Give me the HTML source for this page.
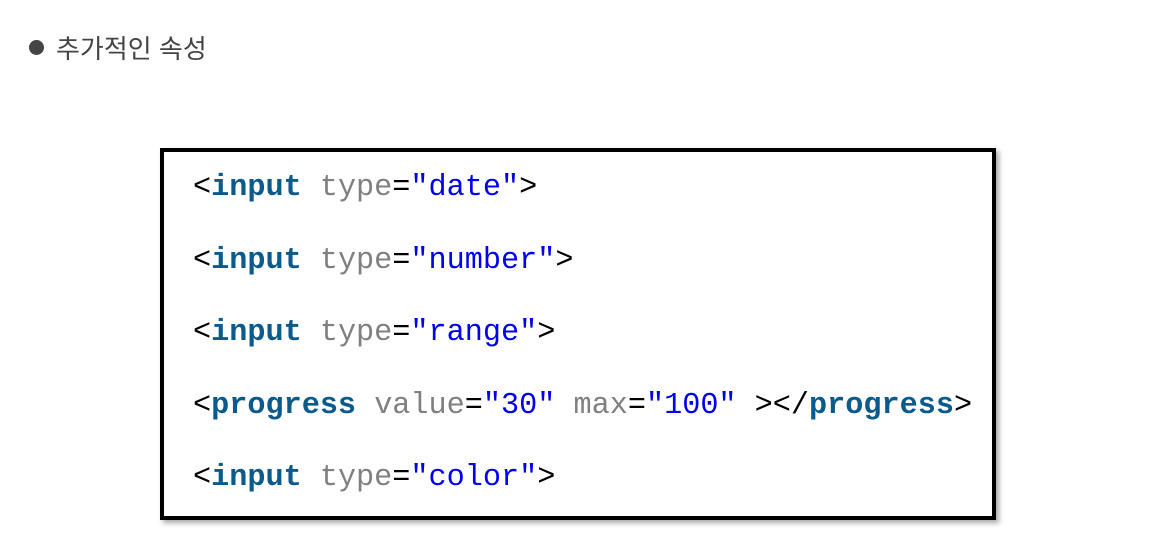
<!DOCTYPE html>
<html><head><meta charset="utf-8"><style>
body{margin:0;width:1153px;height:560px;background:#fff;overflow:hidden;position:relative}
.h{position:absolute;left:56px;top:31px;font:26px "Liberation Sans","Noto Sans CJK KR",sans-serif;color:#444;line-height:36px}
.dot{position:absolute;left:29px;top:40px;width:15px;height:15px;border-radius:50%;background:#444}
.box{position:absolute;left:160px;top:148px;width:828px;height:364px;border:4px solid #000;box-shadow:3px 3px 5px rgba(0,0,0,.35);background:#fff}
.l{position:absolute;left:193px;font-family:"Liberation Mono","DejaVu Sans Mono",monospace;font-size:30.2px;line-height:36px;white-space:pre;color:#000}
.k{color:#0b5a8c;font-weight:bold}.a{color:#808080}.s{color:#0000ee}
</style></head><body>
<div class="dot"></div><div class="h">추가적인 속성</div>
<div class="box"></div>
<div class="l" style="top:170px">&lt;<span class="k">input</span> <span class="a">type</span>=<span class="s">"date"</span>&gt;</div>
<div class="l" style="top:243px">&lt;<span class="k">input</span> <span class="a">type</span>=<span class="s">"number"</span>&gt;</div>
<div class="l" style="top:315px">&lt;<span class="k">input</span> <span class="a">type</span>=<span class="s">"range"</span>&gt;</div>
<div class="l" style="top:388px">&lt;<span class="k">progress</span> <span class="a">value</span>=<span class="s">"30"</span> <span class="a">max</span>=<span class="s">"100"</span> &gt;&lt;/<span class="k">progress</span>&gt;</div>
<div class="l" style="top:460px">&lt;<span class="k">input</span> <span class="a">type</span>=<span class="s">"color"</span>&gt;</div>
</body></html>
